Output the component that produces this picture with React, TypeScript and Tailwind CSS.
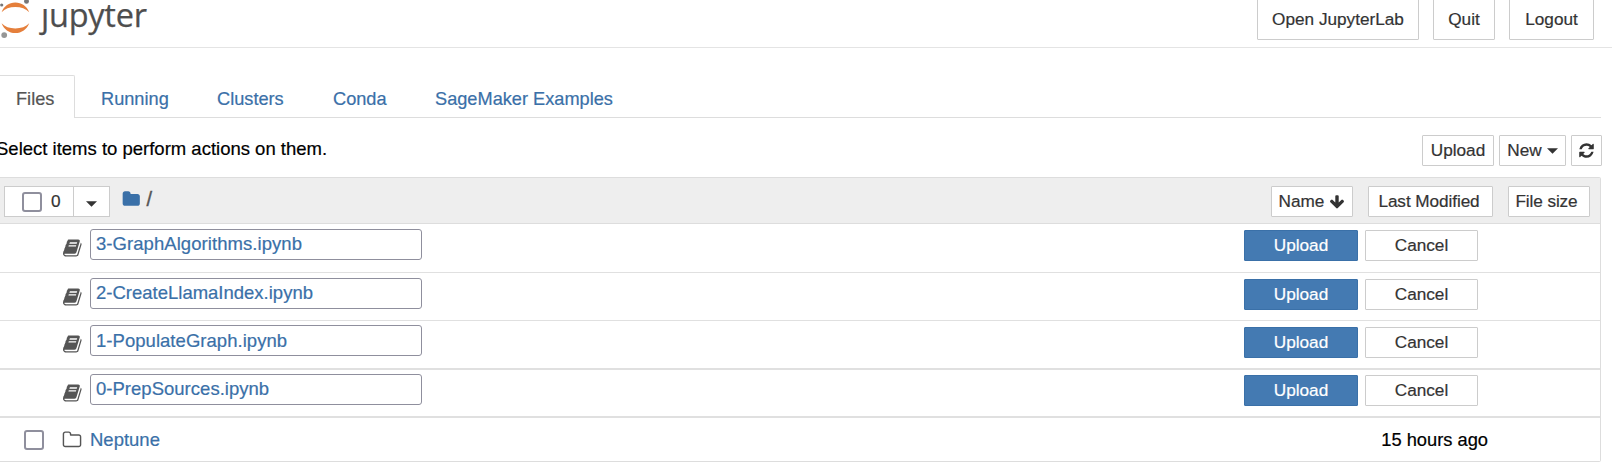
import React from "react";

const ICONS = {
  book: "M1639 478q40 57 18 129l-275 906q-19 64-76.5 107.5t-122.5 43.5h-923q-77 0-148.5-53.5t-99.5-131.5q-24-67-2-127 0-4 3-27t4-37q1-8-3-21.5t-3-19.5q2-11 8-21t16.5-23.5 16.5-23.5q23-38 45-91.5t30-91.5q3-10 .5-30t-.5-28q3-11 17-28t17-23q21-36 42-92t25-90q1-9-2.5-32t.5-28q4-13 22-30.5t22-22.5q19-26 42.5-84.5t27.5-96.5q1-8-3-25.5t-2-26.5q2-8 9-18t18-23 17-21q8-12 16.5-30.5t15-35 16-36 19.5-32 26.5-23.5 36-11.5 47.5 5.5l-1 3q38-9 51-9h761q74 0 114 56t18 130l-274 906q-36 119-71.5 153.5t-128.5 34.5h-869q-27 0-38 15-11 16-1 43 24 70 144 70h923q29 0 56-15.5t35-41.5l300-987q7-22 5-57 38 15 59 43zm-1064 2q-4 13 2 22.5t20 9.5h608q13 0 25.5-9.5t16.5-22.5l21-64q4-13-2-22.5t-20-9.5h-608q-13 0-25.5 9.5t-16.5 22.5zm-83 256q-4 13 2 22.5t20 9.5h608q13 0 25.5-9.5t16.5-22.5l21-64q4-13-2-22.5t-20-9.5h-608q-13 0-25.5 9.5t-16.5 22.5z",
  folder: "M1728 608v704q0 92-66 158t-158 66h-1216q-92 0-158-66t-66-158v-960q0-92 66-158t158-66h320q92 0 158 66t66 158v32h672q92 0 158 66t66 158z",
  folderOpen: "M1600 1312v-704q0-40-28-68t-68-28h-704q-40 0-68-28t-28-68v-64q0-40-28-68t-68-28h-320q-40 0-68 28t-28 68v960q0 40 28 68t68 28h1216q40 0 68-28t28-68zm128-704v704q0 92-66 158t-158 66h-1216q-92 0-158-66t-66-158v-960q0-92 66-158t158-66h320q92 0 158 66t66 158v32h672q92 0 158 66t66 158z",
  refresh: "M1639 1056q0 5-1 7-64 268-268 434.5t-478 166.5q-146 0-282.5-55t-243.5-157l-129 129q-19 19-45 19t-45-19-19-45v-448q0-26 19-45t45-19h448q26 0 45 19t19 45-19 45l-137 137q71 66 161 102t187 36q134 0 250-65t186-179q11-17 53-117 8-23 30-23h192q13 0 22.5 9.5t9.5 22.5zm25-800v448q0 26-19 45t-45 19h-448q-26 0-45-19t-19-45 19-45l138-138q-148-137-349-137-134 0-250 65t-186 179q-11 17-53 117-8 23-30 23h-199q-13 0-22.5-9.5t-9.5-22.5v-7q65-268 270-434.5t480-166.5q146 0 284 55.5t245 156.5l130-129q19-19 45-19t45 19 19 45z",
  arrowDown: "M1675 832q0 53-37 90l-651 652q-39 37-91 37-53 0-90-37l-651-652q-38-36-38-90 0-53 38-91l74-75q39-37 91-37 53 0 90 37l294 294v-704q0-52 38-90t90-38h128q52 0 90 38t38 90v704l294-294q37-37 90-37 52 0 91 37l75 75q37 39 37 91z",
};

function Icon({ name, className }: { name: keyof typeof ICONS; className: string }) {
  return (
    <svg viewBox="0 0 1792 1792" fill="currentColor" className={`shrink-0 ${className}`} aria-hidden="true">
      <path d={ICONS[name]} />
    </svg>
  );
}

function Caret() {
  return (
    <svg viewBox="0 0 12 6" className="h-[6px] w-[11px] shrink-0" fill="currentColor" aria-hidden="true">
      <path d="M0 0h12L6 6z" />
    </svg>
  );
}

function Button({ className, children }: { className: string; children: React.ReactNode }) {
  return (
    <button
      className={`flex h-[31px] shrink-0 items-center justify-center whitespace-nowrap rounded-[1px] border border-[#cccccc] bg-white text-[17.2px] leading-none text-[#333333] ${className}`}
    >
      {children}
    </button>
  );
}

function Checkbox({ className }: { className: string }) {
  return <span role="checkbox" aria-checked="false" className={`block size-5 shrink-0 rounded-[3px] border-2 border-[#8f8f9d] bg-white ${className}`} />;
}

function Logo() {
  return (
    <div className="flex h-[47px] items-start">
      <svg viewBox="0 0 34 40" className="h-[40px] w-[34px] shrink-0" aria-hidden="true">
        <path d="M1.6 12.2C4 6 9 2.5 15.3 2.5S26.8 6 29.2 12.2C26 8.7 21 6.9 15.3 6.9S4.8 8.7 1.6 12.2z" fill="#e57f3b" />
        <path d="M1.6 23.3C4.8 26.7 9.6 28.5 15.3 28.5S26 26.7 29.2 23.3C26.8 29.5 21.7 33.1 15.3 33.1S4 29.5 1.6 23.3z" fill="#e57f3b" />
        <circle cx="4.2" cy="35.1" r="2.9" fill="#969696" />
        <circle cx="26.5" cy="1.4" r="2.4" fill="#767677" />
        <circle cx="1.7" cy="5" r="1.6" fill="#767677" />
      </svg>
      <span className="mt-[-8px] flex pl-[7px] font-['Open_Sans',sans-serif] text-[32.5px] leading-[46px] tracking-[-0.25px] text-[#4e4e4e] [-webkit-text-stroke:0.25px_#4e4e4e]">
        <span className="[clip-path:inset(17px_0_0_-12px)]">j</span>upyter
      </span>
    </div>
  );
}

const TABS = [
  { label: "Running", width: "w-[116px]" },
  { label: "Clusters", width: "w-[116px]" },
  { label: "Conda", width: "w-[102px]" },
  { label: "SageMaker Examples", width: "w-[228px]" },
];

const UPLOADS = [
  { name: "3-GraphAlgorithms.ipynb", row: "h-[49px] border-b", pad: "pt-[5px]", text: "tracking-[0.06px]", actions: "pt-[1px]" },
  { name: "2-CreateLlamaIndex.ipynb", row: "h-[48px] border-b", pad: "pt-[5px]", text: "tracking-[0px] pb-[1px]", actions: "pt-[1px]" },
  { name: "1-PopulateGraph.ipynb", row: "h-[49px] border-b-2", pad: "pt-[4px]", text: "tracking-[0.04px] pt-[1px]", actions: "pt-[2px]" },
  { name: "0-PrepSources.ipynb", row: "h-[48px] border-b-2", pad: "pt-[4px]", text: "tracking-[0.02px]", actions: "pt-[1px]" },
];

export default function App() {
  return (
    <div className="h-[468px] w-[1612px] overflow-hidden bg-white font-['Liberation_Sans',Arial,sans-serif] text-[18.3px] text-black [-webkit-text-stroke:0.2px_currentColor]">
      <header className="flex h-[48px] items-start justify-between border-b border-[#e4e4e4] pr-[18px]">
        <Logo />
        <div className="flex gap-[14px]">
          <Button className="mt-[-2px] h-[42px] w-[162px] pt-[2px]">Open JupyterLab</Button>
          <Button className="mt-[-2px] h-[42px] w-[62px] pt-[2px]">Quit</Button>
          <Button className="mt-[-2px] h-[42px] w-[85px] pt-[2px]">Logout</Button>
        </div>
      </header>

      <nav className="mr-[11px] flex h-[70px] items-end border-b border-[#dddddd] text-[18.2px]">
        <div className="mb-[-1px] flex h-[43px] w-[75px] items-center rounded-tr-[2px] border-r border-t border-[#dddddd] bg-white pl-[16px] pt-[5px] text-[#555555]">
          Files
        </div>
        <div className="flex h-[42px] items-center pl-[26px] pt-[7px] text-[#3a70a8]">
          {TABS.map((tab) => (
            <a key={tab.label} className={`whitespace-nowrap ${tab.width}`}>
              {tab.label}
            </a>
          ))}
        </div>
      </nav>

      <div className="flex h-[59px] items-start justify-between pr-[10px] pt-[17px]">
        <p className="ml-[-4px] pt-[1px] text-[18.5px] leading-[26px]">Select items to perform actions on them.</p>
        <div className="flex gap-[5px]">
          <Button className="w-[72px]">Upload</Button>
          <Button className="w-[67px] gap-[5px]">
            New
            <Caret />
          </Button>
          <Button className="w-[31px]">
            <Icon name="refresh" className="size-[17px]" />
          </Button>
        </div>
      </div>

      <main className="mr-[11px] h-[285px] rounded-r-[2px] border-y border-r border-[#dddddd]">
        <div className="flex h-[46px] items-start border-b border-[#dddddd] bg-[#eeeeee] pl-[4px] pr-[10px] pt-[8px]">
          <div className="flex h-[31px] w-[106px] border border-[#cccccc] bg-white text-[#333333]">
            <div className="flex w-[69px] items-center border-r border-[#cccccc] pl-[17px] text-[17.2px]">
              <Checkbox className="mr-[9px]" />0
            </div>
            <div className="flex flex-1 items-center justify-center pt-[4px]">
              <Caret />
            </div>
          </div>
          <div className="flex items-center pl-[12px] leading-[26px] text-[#555555]">
            <Icon name="folder" className="mr-[6px] size-[18.5px] text-[#3a70a8]" />
            <span className="text-[20px] [-webkit-text-stroke:0.4px_currentColor]">/</span>
          </div>
          <div className="ml-auto flex gap-[15px]">
            <Button className="w-[82px] gap-[5px]">
              Name
              <Icon name="arrowDown" className="size-[16px]" />
            </Button>
            <Button className="w-[125px] pr-[3px] tracking-[-0.08px]">Last Modified</Button>
            <Button className="w-[82px] pr-[5px] tracking-[-0.1px]">File size</Button>
          </div>
        </div>

        {UPLOADS.map((item) => (
          <div key={item.name} className={`flex items-start border-[#e0e0e0] pl-[63px] pr-[122px] ${item.row} ${item.pad}`}>
            <Icon name="book" className="mt-[9px] size-[20px] text-[#555555]" />
            <div className={`ml-[7px] flex h-[31px] w-[332px] items-center rounded-[3px] border border-[#8f8f9d] bg-white pl-[5px] text-[18.5px] leading-none text-[#3a70a8] ${item.text}`}>
              {item.name}
            </div>
            <div className={`ml-auto flex gap-[7px] ${item.actions}`}>
              <Button className="w-[114px] border-[#3a70a8]! bg-[#447ab2]! text-white!">Upload</Button>
              <Button className="w-[113px]">Cancel</Button>
            </div>
          </div>
        ))}

        <div className="flex h-[44px] items-center pl-[24px] pr-[112px]">
          <Checkbox className="mr-[18px]" />
          <Icon name="folderOpen" className="size-[20px] text-[#555555]" />
          <a className="ml-[8px] text-[18.5px] text-[#3a70a8]">Neptune</a>
          <span className="ml-auto">15 hours ago</span>
        </div>
      </main>
    </div>
  );
}
